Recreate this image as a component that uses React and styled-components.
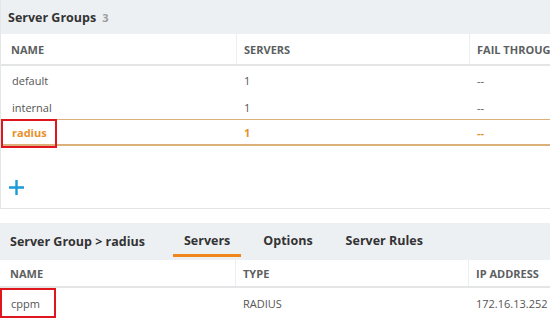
import React from "react";
import styled, { createGlobalStyle } from "styled-components";

const groups = [
  { name: "default", servers: "1", fail: "--" },
  { name: "internal", servers: "1", fail: "--" },
  { name: "radius", servers: "1", fail: "--", selected: true },
];

const servers = [{ name: "cppm", type: "RADIUS", ip: "172.16.13.252" }];

export default function App() {
  return (
    <Root>
      <GlobalStyle />
      <Panel>
        <PanelHeader>
          <Title>Server Groups</Title>
          <Count>3</Count>
        </PanelHeader>
        <Table>
          <HeadRow h={30}>
            <HeadCell>NAME</HeadCell>
            <HeadCell>SERVERS</HeadCell>
            <HeadCell>FAIL THROUGH</HeadCell>
          </HeadRow>
          {groups.map((g) => (
            <Row key={g.name} selected={g.selected}>
              <Cell selected={g.selected}>
                {g.selected && <Callout h={29} />}
                {g.name}
              </Cell>
              <Cell selected={g.selected}>{g.servers}</Cell>
              <Cell selected={g.selected}>{g.fail}</Cell>
            </Row>
          ))}
        </Table>
        <AddArea>
          <AddButton aria-label="add">
            <svg width="15" height="15" viewBox="0 0 15 15">
              <path d="M7.5 0v15M0 7.5h15" stroke="#1a9ad6" strokeWidth="2.4" />
            </svg>
          </AddButton>
        </AddArea>
      </Panel>

      <DetailPanel>
        <TabBar>
          <Crumb>Server Group &gt; radius</Crumb>
          <Tab active>Servers</Tab>
          <Tab>Options</Tab>
          <Tab>Server Rules</Tab>
        </TabBar>
        <Table>
          <HeadRow h={26}>
            <HeadCell>NAME</HeadCell>
            <HeadCell>TYPE</HeadCell>
            <HeadCell>IP ADDRESS</HeadCell>
          </HeadRow>
          {servers.map((s) => (
            <Row key={s.name} tall>
              <Cell>
                <Callout h={30} />
                {s.name}
              </Cell>
              <Cell>{s.type}</Cell>
              <Cell>{s.ip}</Cell>
            </Row>
          ))}
        </Table>
      </DetailPanel>
    </Root>
  );
}

const GlobalStyle = createGlobalStyle`
  html, body {
    margin: 0;
    padding: 0;
    background: #ffffff;
    overflow: hidden;
  }
  body {
    font-family: "Open Sans", "Liberation Sans", sans-serif;
    color: #555;
  }
`;

const Root = styled.div`
  width: 620px;
  height: 328px;
  display: flex;
  flex-direction: column;
  gap: 14px;
`;

const Panel = styled.div`
  border-left: 1px solid #e4e6e8;
  border-bottom: 1px solid #e2e4e6;
`;

const PanelHeader = styled.div`
  height: 34px;
  background: #edf0f3;
  display: flex;
  align-items: center;
  padding-left: 7px;
  gap: 6px;
`;

const Title = styled.span`
  font-size: 12.5px;
  font-weight: 700;
  color: #333;
`;

const Count = styled.span`
  font-size: 11px;
  font-weight: 700;
  color: #9a9da1;
  margin-top: 1px;
`;

const Table = styled.div`
  display: flex;
  flex-direction: column;
`;

const HeadRow = styled.div`
  display: grid;
  grid-template-columns: 235px 233px 1fr;
  height: ${(p) => p.h}px;
  border-bottom: 2px solid #e3e5e7;
  background: #fff;
`;

const HeadCell = styled.div`
  display: flex;
  align-items: center;
  padding-left: 10px;
  font-size: 11px;
  font-weight: 700;
  color: #5c5f62;
  & + & {
    border-left: 1px solid #eceef0;
    padding-left: 7px;
  }
`;

const Row = styled.div`
  display: grid;
  grid-template-columns: 235px 233px 1fr;
  height: ${(p) => (p.tall ? 30 : 27)}px;
  box-sizing: border-box;
  border-top: 1px solid ${(p) => (p.selected ? "#dcb07a" : "transparent")};
  border-bottom: ${(p) => (p.selected ? "2px solid #dcb07a" : "none")};
  margin-top: ${(p) => (p.selected ? "-1px" : "0")};
`;

const Cell = styled.div`
  position: relative;
  display: flex;
  align-items: center;
  padding-left: 11px;
  font-size: 11px;
  font-weight: ${(p) => (p.selected ? 700 : 400)};
  color: ${(p) => (p.selected ? "#e8912c" : "#555")};
  & + & {
    padding-left: 8px;
  }
`;

const Callout = styled.span`
  position: absolute;
  left: 0;
  top: -1px;
  width: 56px;
  height: ${(p) => p.h}px;
  box-sizing: border-box;
  border: 2px solid #e0161f;
`;

const AddArea = styled.div`
  height: 62px;
  display: flex;
  align-items: center;
  padding-left: 8px;
`;

const AddButton = styled.span`
  display: flex;
  margin-top: 20px;
`;

const DetailPanel = styled.div``;

const TabBar = styled.div`
  height: 37px;
  background: #edf0f3;
  display: flex;
  align-items: stretch;
  padding-left: 10px;
`;

const Crumb = styled.div`
  display: flex;
  align-items: center;
  font-size: 12.5px;
  font-weight: 700;
  color: #333;
  margin-right: 28px;
`;

const Tab = styled.div`
  display: flex;
  align-items: center;
  padding: 3px 11px 0;
  margin: 0 11px 3px 0;
  font-size: 12.5px;
  font-weight: 700;
  color: #333;
  box-sizing: border-box;
  border-bottom: 3px solid ${(p) => (p.active ? "#f0861b" : "transparent")};
`;
